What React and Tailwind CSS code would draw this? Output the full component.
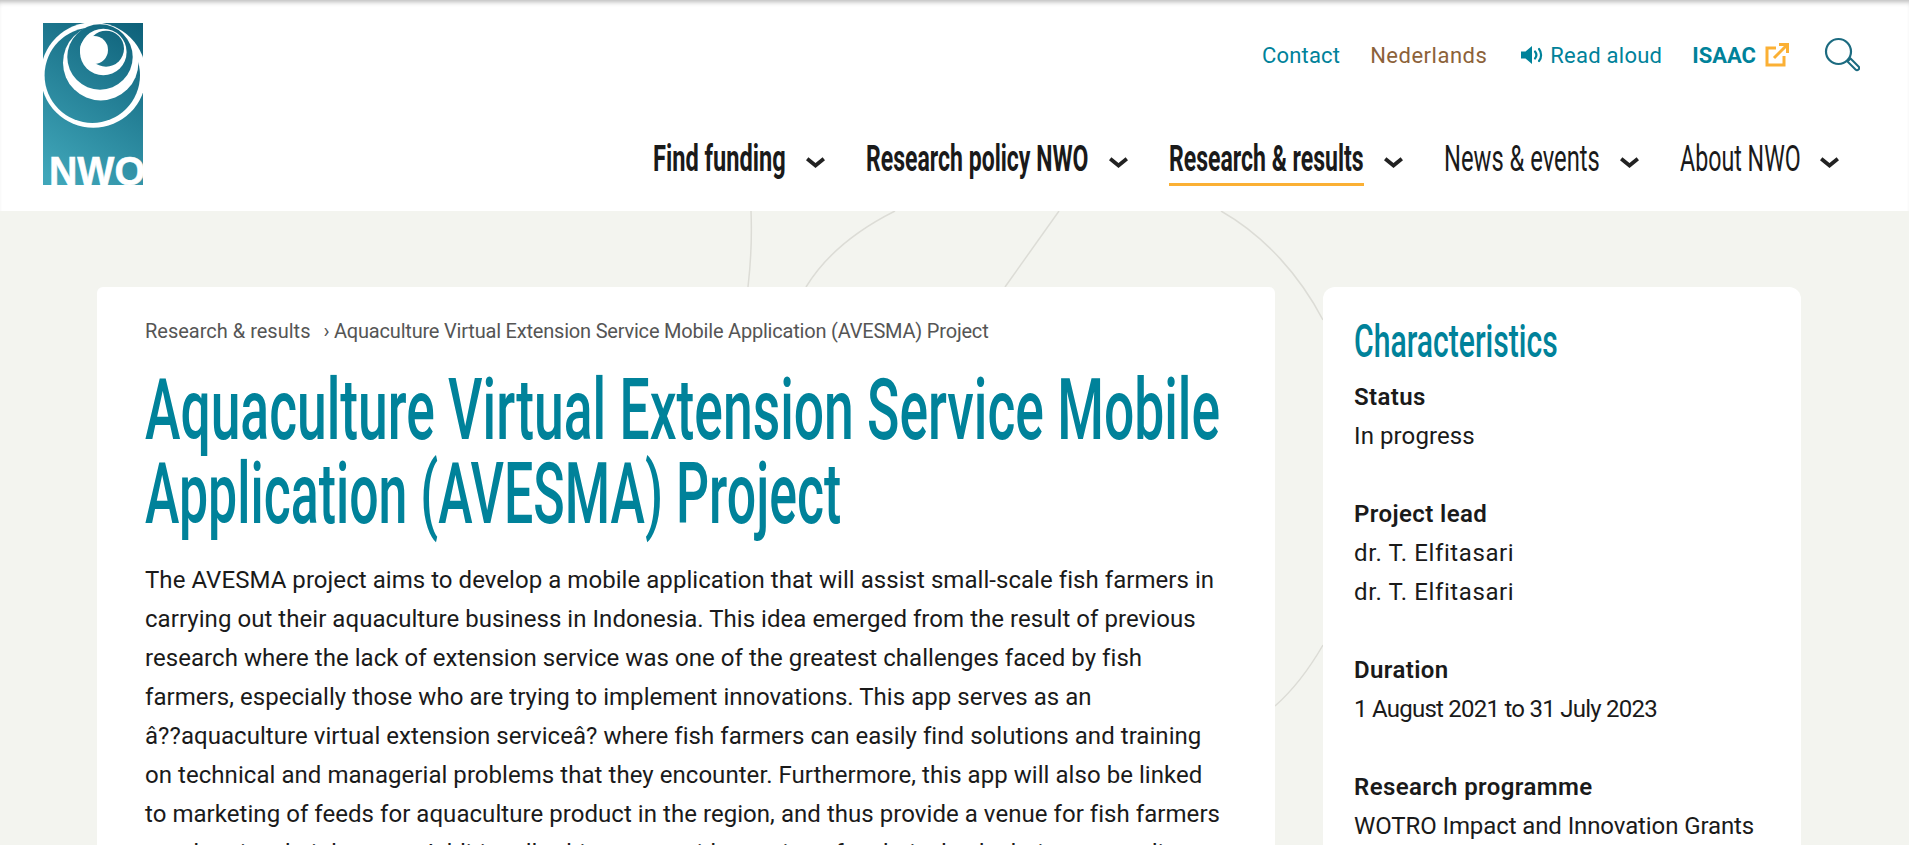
import React from 'react';

const navItems = [
    { label: 'Find funding', width: 'w-[133px]', scale: 'scale-x-[0.655]', weight: 'font-bold' },
    { label: 'Research policy NWO', width: 'w-[223px]', scale: 'scale-x-[0.64]', weight: 'font-bold' },
    { label: 'Research & results', width: 'w-[195px]', scale: 'scale-x-[0.64]', weight: 'font-bold', active: true },
    { label: 'News & events', width: 'w-[156px]', scale: 'scale-x-[0.66]', weight: 'font-normal' },
    { label: 'About NWO', width: 'w-[120px]', scale: 'scale-x-[0.645]', weight: 'font-normal' },
];

const paragraph = [
    'The AVESMA project aims to develop a mobile application that will assist small-scale fish farmers in',
    'carrying out their aquaculture business in Indonesia. This idea emerged from the result of previous',
    'research where the lack of extension service was one of the greatest challenges faced by fish',
    'farmers, especially those who are trying to implement innovations. This app serves as an',
    'â??aquaculture virtual extension serviceâ? where fish farmers can easily find solutions and training',
    'on technical and managerial problems that they encounter. Furthermore, this app will also be linked',
    'to marketing of feeds for aquaculture product in the region, and thus provide a venue for fish farmers',
    'to advertise their harvest. Additionally, this app provides option of technical calculations regarding',
];

const characteristics = [
    { title: 'Status', values: [{ text: 'In progress', tracking: 'tracking-[0.1px]' }] },
    { title: 'Project lead', values: [{ text: 'dr. T. Elfitasari', tracking: 'tracking-[0.6px]' }, { text: 'dr. T. Elfitasari', tracking: 'tracking-[0.6px]' }] },
    { title: 'Duration', values: [{ text: '1 August 2021 to 31 July 2023', tracking: 'tracking-[-0.75px]' }] },
    { title: 'Research programme', values: [{ text: 'WOTRO Impact and Innovation Grants', tracking: 'tracking-[-0.1px]' }] },
];

const Logo = () => (
    <svg width="100" height="162" viewBox="0 0 100 162" className="block shrink-0">
        <defs>
            <linearGradient id="nwo" gradientUnits="userSpaceOnUse" x1="0" y1="150" x2="100" y2="0">
                <stop offset="0" stopColor="#40a6b9" />
                <stop offset="1" stopColor="#0d6079" />
            </linearGradient>
            <clipPath id="box"><rect width="100" height="162" /></clipPath>
        </defs>
        <g clipPath="url(#box)">
            <rect width="100" height="162" fill="url(#nwo)" />
            <circle cx="50.3" cy="52" r="52.7" fill="#fff" />
            <circle cx="49.3" cy="52.3" r="47.7" fill="url(#nwo)" />
            <circle cx="57.7" cy="39.7" r="37.7" fill="#fff" />
            <circle cx="57" cy="34" r="32.7" fill="url(#nwo)" />
            <circle cx="60.3" cy="29" r="23.3" fill="#fff" />
            <circle cx="63" cy="25.7" r="18" fill="url(#nwo)" />
            <circle cx="51" cy="27" r="14" fill="#fff" />
            <text x="6" y="162" fontFamily="'Liberation Sans', sans-serif" fontWeight="700" fontSize="41" fill="#fff" stroke="#fff" strokeWidth="0.6" textLength="96" lengthAdjust="spacingAndGlyphs">NWO</text>
        </g>
    </svg>
);

const SpeakerIcon = () => (
    <svg width="24" height="20" viewBox="0 0 24 20" fill="none" className="shrink-0">
        <path d="M0 6.5h4.5L11 1v18l-6.5-5.5H0z" fill="#00829a" />
        <path d="M14 6.5c1.6 2 1.6 5 0 7M18 4c2.8 3.4 2.8 8.600 0 12" stroke="#00829a" strokeWidth="2.2" strokeLinecap="round" />
    </svg>
);

const ExternalIcon = () => (
    <svg width="24" height="24" viewBox="0 0 24 24" fill="none" stroke="#fbb034" strokeWidth="3" className="shrink-0">
        <path d="M11 5H2v17h17v-9" />
        <path d="M9 15L22 2M14 1.500h8.500V10" />
    </svg>
);

const SearchIcon = () => (
    <svg width="36" height="36" viewBox="0 0 36 36" fill="none" stroke="#1c6b80" className="shrink-0">
        <circle cx="14.500" cy="14.500" r="12.500" strokeWidth="2.200" />
        <path d="M23.500 24.500l3-3 8 8a2.100 2.100 0 0 1-3 3z" strokeWidth="2" />
    </svg>
);

const Chevron = () => (
    <svg width="19" height="11" viewBox="0 0 19 11" fill="none" stroke="#222222" strokeWidth="3.800" className="shrink-0 mt-[3px]">
        <path d="M1.200 1.800L9.500 8.500l8.300-6.700" />
    </svg>
);

const App = () => {
    return (
        <div className="h-[845px] overflow-hidden bg-[#f3f4ef] font-['Roboto',sans-serif] text-[#1a1a1a]">
            <header className="h-[211px] bg-white shadow-[inset_0_5px_5px_-3px_rgba(0,0,0,0.28)] pl-[43px] pr-[49px] pt-[23px] flex justify-between">
                <Logo />
                <div className="flex flex-col items-end">
                    <div className="flex items-center h-[64px] text-[22px]">
                        <a className="text-[#00829a] tracking-[0.2px]">Contact</a>
                        <a className="text-[#8c6239] ml-[30px] tracking-[0.5px]">Nederlands</a>
                        <a className="text-[#00829a] flex items-center gap-[5px] ml-[34px] tracking-[0.25px]"><SpeakerIcon />Read aloud</a>
                        <a className="text-[#00829a] font-bold flex items-center gap-[9px] ml-[30px]">ISAAC<ExternalIcon /></a>
                        <div className="ml-[35px]"><SearchIcon /></div>
                    </div>
                    <nav className="flex items-start mt-[49px] mr-[21px] gap-[41px]">
                        {navItems.map(item => (
                            <div key={item.label} className="flex items-center gap-[20px]">
                                <span className={`block ${item.width} h-[50px] whitespace-nowrap border-b-[3px] ${item.active ? 'border-[#fbb034]' : 'border-transparent'}`}>
                                    <span className={`inline-block origin-left ${item.scale} ${item.weight} text-[36px] leading-[46px]`}>{item.label}</span>
                                </span>
                                <Chevron />
                            </div>
                        ))}
                    </nav>
                </div>
            </header>
            <main className="relative flex gap-[48px] pl-[97px] pt-[76px]">
                {/* circle lines behind the cards */}
                <svg className="absolute left-0 top-0" width="1909" height="634" fill="none" stroke="#dcdcd6" strokeWidth="1.500">
                    <path d="M751 0C752 25 751 50 748 76" />
                    <path d="M895 0C855 20 825 45 806 76" />
                    <path d="M1059 0L1005 76" />
                    <path d="M1221 0C1265 25 1300 65 1323 109" />
                    <path d="M1323 434C1308 460 1292 480 1275 495" />
                </svg>
                <section className="relative w-[1178px] shrink-0 bg-white rounded-md px-[48px] pt-[30px]">
                    <div className="text-[20px] text-[#555555] leading-[28px] whitespace-nowrap">Research &amp; results<span className="ml-[13px] tracking-[-0.2px]">› Aquaculture Virtual Extension Service Mobile Application (AVESMA) Project</span></div>
                    <h1 className="text-[#00829a] text-[86px] leading-[84px] font-medium mt-[23px]">
                        <span className="block whitespace-nowrap origin-left scale-x-[0.621]">Aquaculture Virtual Extension Service Mobile</span>
                        <span className="block whitespace-nowrap origin-left scale-x-[0.603]">Application (AVESMA) Project</span>
                    </h1>
                    <div className="mt-[25px] text-[24px] leading-[39px] tracking-[0.05px]">
                        {paragraph.map(line => <div key={line} className="whitespace-nowrap">{line}</div>)}
                    </div>
                </section>
                <aside className="relative w-[478px] shrink-0 bg-white rounded-xl px-[31px] pt-[30px]">
                    <h2 className="text-[#00829a] text-[46px] leading-[48px] font-medium whitespace-nowrap origin-left scale-x-[0.655] mb-[13px]">Characteristics</h2>
                    {characteristics.map(group => (
                        <div key={group.title} className="mb-[39px]">
                            <div className="font-semibold text-[24px] leading-[39px] tracking-[0.4px]">{group.title}</div>
                            {group.values.map((v, i) => <div key={i} className={`text-[24px] leading-[39px] whitespace-nowrap ${v.tracking}`}>{v.text}</div>)}
                        </div>
                    ))}
                </aside>
            </main>
        </div>
    );
};

export default App;
